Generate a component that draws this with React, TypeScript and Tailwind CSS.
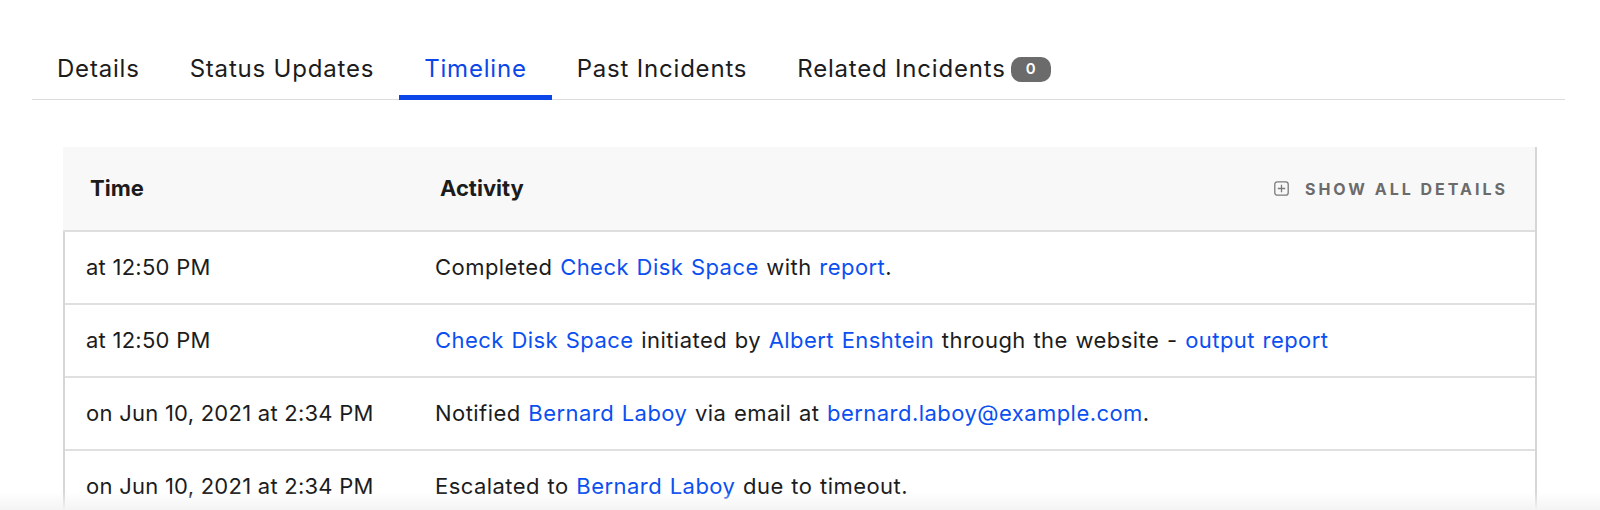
import React from "react";

const L = ({ children }: { children: React.ReactNode }) => (
  <span className="text-[#0b4ff0]">{children}</span>
);

const rows: { time: string; activity: React.ReactNode }[] = [
  {
    time: "at 12:50 PM",
    activity: (
      <>
        Completed <L>Check Disk Space</L> with <L>report</L>.
      </>
    ),
  },
  {
    time: "at 12:50 PM",
    activity: (
      <>
        <L>Check Disk Space</L> initiated by <L>Albert Enshtein</L> through the website - <L>output report</L>
      </>
    ),
  },
  {
    time: "on Jun 10, 2021 at 2:34 PM",
    activity: (
      <>
        Notified <L>Bernard Laboy</L> via email at <L>bernard.laboy@example.com</L>.
      </>
    ),
  },
  {
    time: "on Jun 10, 2021 at 2:34 PM",
    activity: (
      <>
        Escalated to <L>Bernard Laboy</L> due to timeout.
      </>
    ),
  },
];

export default function App() {
  return (
    <div
      className="relative h-[510px] w-[1600px] overflow-hidden bg-white text-[#1c1c1c]"
      style={{ fontFamily: "Inter, 'Noto Sans', sans-serif" }}
    >
      <div className="ml-[32px] mr-[35px] pt-[46px]">
        <div className="flex border-b border-[#dcdcdc]">
          {["Details", "Status Updates", "Timeline", "Past Incidents", "Related Incidents"].map((t) => {
            const active = t === "Timeline";
            return (
              <div
                key={t}
                className={`flex items-center px-[25px] pb-[9px] pt-[6px] text-[24px] leading-[34px] tracking-[0.8px] border-b-[5px] -mb-px ${
                  active ? "border-[#0b47e8] text-[#0b47e8]" : "border-transparent"
                }`}
              >
                {t}
                {t === "Related Incidents" && (
                  <span className="ml-[5px] inline-flex h-[25px] w-[40px] items-center justify-center rounded-[10px] bg-[#6b6b6b] text-[15px] font-semibold tracking-normal text-white">
                    0
                  </span>
                )}
              </div>
            );
          })}
        </div>
      </div>

      <div className="ml-[63px] mt-[47px] w-[1474px] border-r-2 border-[#d6d6d6]">
        <div className="flex h-[85px] items-center border-b-2 border-[#dedede] bg-[#f8f8f8] text-[22px] font-bold">
          <div className="w-[357px] pl-[27px]">Time</div>
          <div className="flex-1 pl-[20px]">Activity</div>
          <div className="flex items-center gap-[16px] pr-[27px] text-[16px] font-bold tracking-[3px] text-[#6b6b6b]">
            <svg width="15" height="15" viewBox="0 0 15 15" fill="none" stroke="#7a7a7a" strokeWidth="1.3">
              <rect x="0.8" y="0.8" width="13.4" height="13.4" rx="2.5" />
              <path d="M7.5 3.8v7.4M3.8 7.5h7.4" />
            </svg>
            SHOW ALL DETAILS
          </div>
        </div>
        <div className="border-l-2 border-[#d6d6d6]">
          {rows.map((r, i) => (
            <div
              key={i}
              className="flex h-[73px] items-center border-b-2 border-[#e0e0e0] text-[22px]"
            >
              <div className="w-[347px] pl-[21px] tracking-[0.25px]">{r.time}</div>
              <div className="flex-1 pl-[23px] tracking-[0.45px] [word-spacing:1px]">{r.activity}</div>
            </div>
          ))}
        </div>
      </div>

      <div className="pointer-events-none absolute bottom-0 left-0 h-[18px] w-full bg-gradient-to-b from-transparent to-[#f4f4f4]" />
    </div>
  );
}
